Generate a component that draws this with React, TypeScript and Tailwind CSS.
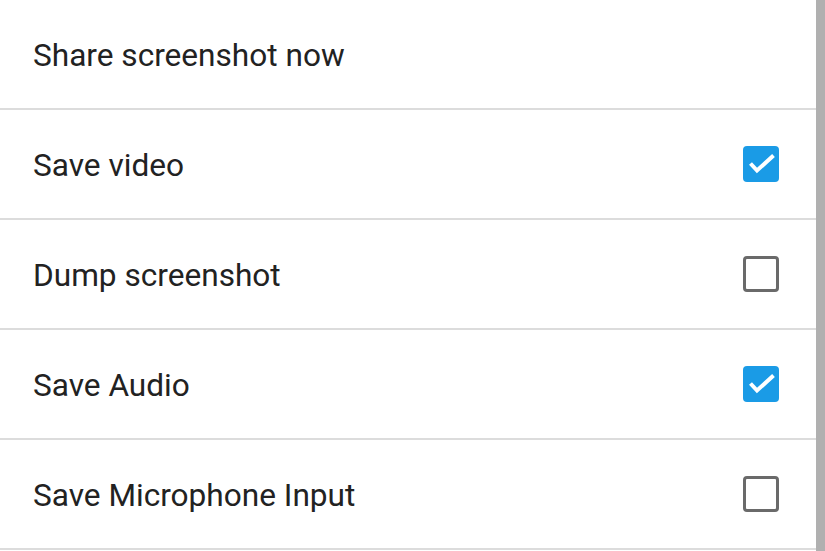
const rows = [
  { label: "Share screenshot now", checkbox: null as boolean | null },
  { label: "Save video", checkbox: true },
  { label: "Dump screenshot", checkbox: false },
  { label: "Save Audio", checkbox: true },
  { label: "Save Microphone Input", checkbox: false },
]

function CheckBox({ checked }: { checked: boolean }) {
  if (checked) {
    return (
      <div className="w-[36px] h-[36px] rounded-[4px] bg-[#1a9be6]">
        <svg width="36" height="36" viewBox="0 0 36 36" fill="none">
          <path d="M7.5 17.5L14 24.5L30.5 9.5" stroke="white" strokeWidth="4" />
        </svg>
      </div>
    )
  }
  return <div className="w-[36px] h-[36px] rounded-[4px] border-[3px] border-[#6a6a6a]" />
}

function Row({ label, checkbox }: { label: string; checkbox: boolean | null }) {
  return (
    <li className="h-[110px] border-b-2 border-[#dcdcdc] flex items-center justify-between pl-[33px] pr-[37px]">
      <span className="text-[31.6px] text-[#222] leading-none pt-[4px]">{label}</span>
      {checkbox !== null && <CheckBox checked={checkbox} />}
    </li>
  )
}

export default function App() {
  return (
    <div className="w-[825px] h-[551px] flex bg-white overflow-hidden" style={{ fontFamily: "Roboto, sans-serif" }}>
      <ul className="flex-1">
        {rows.map((r) => (
          <Row key={r.label} {...r} />
        ))}
      </ul>
      <div className="w-[9px] h-full bg-[#b0b0b0]" />
    </div>
  )
}
